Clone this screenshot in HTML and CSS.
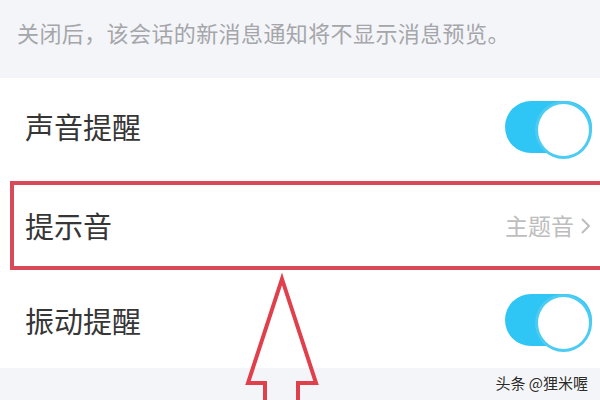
FILE: index.html
```html
<!DOCTYPE html>
<html lang="zh-CN">
<head>
    <meta charset="UTF-8">
    <meta name="viewport" content="width=device-width, initial-scale=1.0">
    <title>消息设置</title>
    <link rel="stylesheet" href="styles.css">
</head>
<body>
    <div class="screen">
        <!-- Hint text -->
        <div class="tip">关闭后，该会话的新消息通知将不显示消息预览。</div>

        <!-- Settings list -->
        <div class="group">
            <div class="row">
                <span class="label">声音提醒</span>
                <span class="switch"></span>
            </div>
            <div class="row highlight">
                <span class="label">提示音</span>
                <span class="value">主题音
                    <svg class="chevron" width="11" height="18" viewBox="0 0 11 18">
                        <path d="M2 2 L9 9 L2 16" fill="none" stroke="#bdbdbd" stroke-width="2"/>
                    </svg>
                </span>
            </div>
            <div class="row">
                <span class="label">振动提醒</span>
                <span class="switch"></span>
            </div>
        </div>

        <div class="bottom"></div>

        <!-- Annotation arrow -->
        <svg class="arrow" width="600" height="400" viewBox="0 0 600 400">
            <polygon points="282,279 316,383 298,383 298,410 265,410 265,383 248,383"
                     fill="none" stroke="#e0404c" stroke-width="4" stroke-linejoin="miter"/>
        </svg>

        <div class="watermark">头条 @狸米喔</div>
    </div>
</body>
</html>
```

FILE: styles.css
```css
* {
    margin: 0;
    padding: 0;
    box-sizing: border-box;
}

body {
    font-family: "Noto Sans CJK SC", "Noto Sans", sans-serif;
    background: #ffffff;
}

.screen {
    position: relative;
    width: 600px;
    height: 400px;
    overflow: hidden;
    display: flex;
    flex-direction: column;
}

/* Hint */
.tip {
    height: 78px;
    background: #f4f5f8;
    color: #a5a6aa;
    font-size: 22px;
    line-height: 22px;
    letter-spacing: 0.4px;
    padding: 21px 0 0 17px;
}

/* List */
.group {
    background: #ffffff;
}

.row {
    position: relative;
    height: 97px;
    display: flex;
    align-items: center;
    justify-content: space-between;
    padding: 0 8px 0 25px;
}

.row:last-child {
    height: 96px;
}

.label {
    font-size: 29px;
    line-height: 29px;
    color: #363636;
}

.value {
    display: flex;
    align-items: center;
    gap: 6px;
    font-size: 23px;
    line-height: 23px;
    color: #bdbdbd;
    padding-right: 1px;
}

.highlight .label,
.highlight .value {
    margin-top: 4px;
}

.highlight::after {
    content: "";
    position: absolute;
    left: 10px;
    right: -10px;
    top: 6px;
    height: 81px;
    border: 4px solid #d84a58;
}

/* Switch */
.switch {
    position: relative;
    width: 87px;
    height: 52px;
    border-radius: 26px;
    background: #2fc6f5;
}

.switch::after {
    content: "";
    position: absolute;
    right: 0;
    top: 0;
    width: 51px;
    height: 52px;
    border-radius: 50%;
    background: #ffffff;
    border: 3px solid #4ccbf3;
}

.bottom {
    flex: 1;
    background: #f4f5f8;
}

/* Overlays */
.arrow {
    position: absolute;
    top: 0;
    left: 0;
    pointer-events: none;
}

.watermark {
    position: absolute;
    right: 12px;
    bottom: 7px;
    font-size: 15px;
    color: #2a2a2a;
    text-shadow: 0 0 2px #ffffff, 0 0 2px #ffffff;
}
```
